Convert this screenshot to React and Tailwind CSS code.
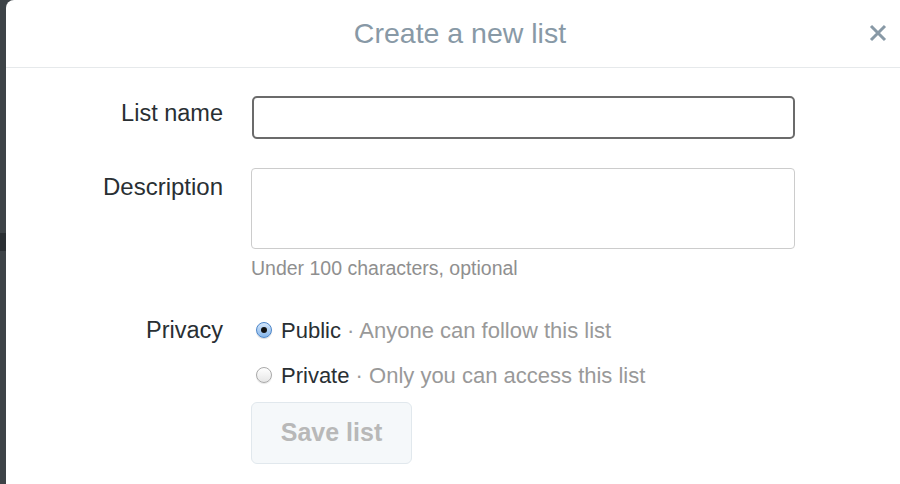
import { useState } from "react";

function Radio({ checked }) {
  return checked ? (
    <span className="flex h-[16px] w-[16px] items-center justify-center rounded-full border border-[#4d86c9] bg-gradient-to-b from-[#d4e7fb] to-[#86b6ea] shadow-[0_1px_1px_rgba(0,0,0,0.15)]">
      <span className="h-[6px] w-[6px] rounded-full bg-[#111]" />
    </span>
  ) : (
    <span className="h-[16px] w-[16px] rounded-full border border-[#a9a9a9] bg-gradient-to-b from-[#ffffff] to-[#e6e6e6] shadow-[0_1px_1px_rgba(0,0,0,0.1)]" />
  );
}

export default function App() {
  const [privacy, setPrivacy] = useState("public");

  return (
    <div className="flex h-[484px] w-[900px] overflow-hidden bg-[#3d4347] font-['Liberation_Sans',Arial,sans-serif]">
      <div className="flex w-[6px] flex-col">
        <div className="h-[233px] bg-[#3d4347]" />
        <div className="h-[18px] bg-[#2a2f33]" />
        <div className="flex-1 bg-[#3d4347]" />
      </div>

      <div className="flex-1 rounded-tl-[8px] bg-white">
        {/* header */}
        <div className="relative flex h-[68px] items-center justify-center border-b border-[#e6e9eb] pl-[14px]">
          <h2 className="text-[28.5px] text-[#8899a6]">Create a new list</h2>
          <button className="absolute right-[13px] top-[24px] text-[#8899a6]">
            <svg width="18" height="18" viewBox="0 0 18 18">
              <path d="M2 2 L16 16 M16 2 L2 16" stroke="currentColor" strokeWidth="3" />
            </svg>
          </button>
        </div>

        {/* form */}
        <div className="pt-[28px]">
          <div className="flex items-start">
            <label className="w-[217px] pt-[3px] text-right text-[23.5px] leading-[28px] text-[#292f33]">
              List name
            </label>
            <input
              autoFocus
              className="ml-[29px] h-[43px] w-[543px] rounded-[5px] border-2 border-[#6b6b6b] px-2 text-[20px] outline-none"
            />
          </div>

          <div className="mt-[29px] flex items-start">
            <label className="w-[217px] pt-[5px] text-right text-[24px] leading-[28px] text-[#292f33]">
              Description
            </label>
            <div className="ml-[28px]">
              <textarea className="block h-[81px] w-[544px] resize-none rounded-[4px] border border-[#cccccc] outline-none" />
              <p className="mt-[7px] text-[19.5px] leading-[24px] text-[#8f8f8f]">
                Under 100 characters, optional
              </p>
            </div>
          </div>

          <div className="mt-[36px] flex items-start">
            <label className="w-[217px] text-right text-[23.5px] leading-[28px] text-[#292f33]">
              Privacy
            </label>
            <div className="ml-[33px] flex flex-col">
              <button
                onClick={() => setPrivacy("public")}
                className="flex h-[28px] items-center gap-[9px] text-[22px]"
              >
                <Radio checked={privacy === "public"} />
                <span className="text-[#292f33]">
                  Public <span className="text-[#999]">· Anyone can follow this list</span>
                </span>
              </button>
              <button
                onClick={() => setPrivacy("private")}
                className="mt-[17px] flex h-[28px] items-center gap-[9px] text-[22px]"
              >
                <Radio checked={privacy === "private"} />
                <span className="text-[#292f33]">
                  Private <span className="text-[#999]">· Only you can access this list</span>
                </span>
              </button>
              <button
                disabled
                className="-ml-[5px] mt-[13px] h-[62px] w-[161px] rounded-[6px] border border-[#e1e8ed] bg-[#f5f8fa] text-[25px] font-bold text-[#b8b8b8]"
              >
                Save list
              </button>
            </div>
          </div>
        </div>
      </div>
    </div>
  );
}
